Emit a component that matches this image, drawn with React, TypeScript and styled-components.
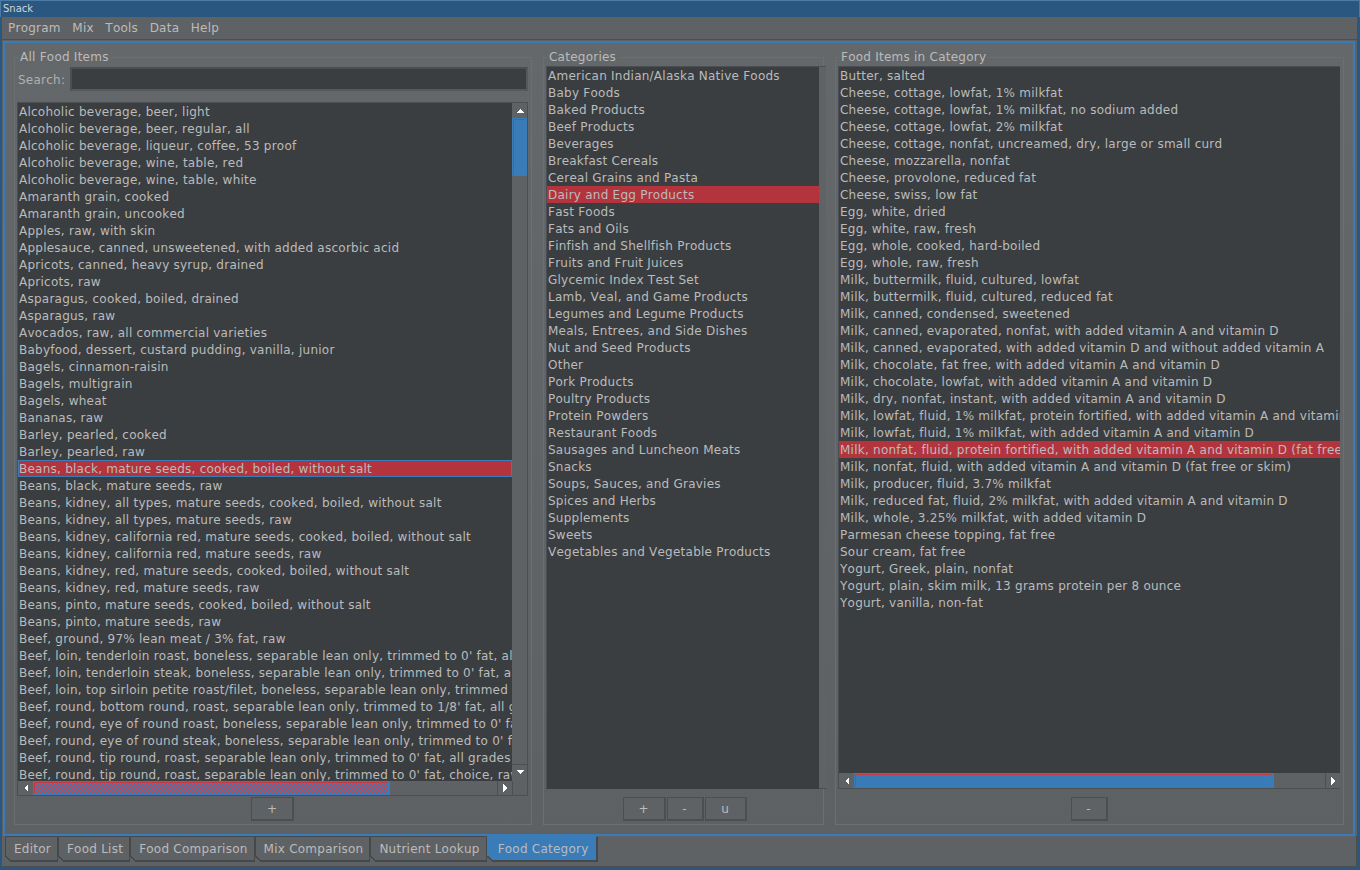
import React from 'react';
import styled, { createGlobalStyle } from 'styled-components';

const GlobalStyle = createGlobalStyle`
  html, body {
    margin: 0;
    padding: 0;
    height: 100%;
    background: #2a5780;
    overflow: hidden;
  }
  #root { height: 100%; }
`;

const Window = styled.div`
  width: 1360px;
  height: 870px;
  display: flex;
  flex-direction: column;
  box-sizing: border-box;
  background: #2a5780;
  font-family: "DejaVu Sans", sans-serif;
  font-size: 12px;
  font-kerning: none;
  letter-spacing: 0.24px;
  color: #bbbbbb;
`;

const TitleBar = styled.div`
  height: 17px;
  flex: none;
  box-sizing: border-box;
  padding-left: 2px;
  line-height: 15px;
  font-size: 10px;
  letter-spacing: 0;
  color: #d0d6da;
  background: #2a5780;
  border-top: 1px solid #4a7ba5;
  border-left: 1px solid #4a7ba5;
  border-right: 1px solid #4a7ba5;
`;

const Body = styled.div`
  flex: 1;
  margin: 0 3px 3px 2px;
  display: flex;
  flex-direction: column;
  background: #5f6265;
  min-height: 0;
`;

const MenuBar = styled.div`
  height: 23px;
  flex: none;
  box-sizing: border-box;
  display: flex;
  align-items: center;
  padding-left: 6px;
  gap: 11.5px;
  border-bottom: 1px solid #4c4f51;
  background: #5f6265;
`;

const MenuItem = styled.span`
  color: #bbbbbb;
  line-height: 20px;
`;

const TabFrame = styled.div`
  flex: 1;
  min-height: 0;
  margin: 1px 2px 0 1px;
  box-sizing: border-box;
  border: 2px solid #3a7cb8;
  padding: 7px 9px 9px 9px;
  display: grid;
  grid-template-columns: 518px 281px 509px;
  column-gap: 11px;
  align-content: start;
  background: linear-gradient(#65686a, #5e6164);
`;

const Panel = styled.fieldset<{ $flush?: boolean }>`
  margin: 0;
  padding: 0 ${(p) => (p.$flush ? '0' : '3px')} 3px 2px;
  min-width: 0;
  min-height: 0;
  height: 775px;
  box-sizing: border-box;
  border: 1px solid #6c6f72;
  display: flex;
  flex-direction: column;
`;

const PanelTitle = styled.legend`
  margin-left: 1px;
  padding: 0 2px;
  height: 14px;
  line-height: 14px;
  color: #bbbbbb;
`;

const SearchRow = styled.div`
  height: 24px;
  flex: none;
  display: flex;
  align-items: center;
  gap: 5px;
  margin: 3px 0 11px 0;
`;

const SearchLabel = styled.label`
  color: #aeb0b2;
  padding: 1px 0 0 1px;
`;

const SearchInput = styled.div`
  flex: 1;
  height: 24px;
  box-sizing: border-box;
  background: #3a3e41;
  border: 2px solid #4c4f51;
  border-right-color: #56595c;
  border-bottom-color: #56595c;
`;

const ListBox = styled.div<{ $top?: number; $overhang?: boolean }>`
  flex: 1;
  min-height: 0;
  margin-top: ${(p) => p.$top ?? 0}px;
  margin-right: ${(p) => (p.$overhang ? '-3px' : '0')};
  display: grid;
  grid-template-columns: minmax(0, 1fr) auto;
  grid-template-rows: minmax(0, 1fr) auto;
`;

const ListView = styled.div`
  grid-column: 1;
  grid-row: 1;
  overflow: hidden;
  background: #3a3e41;
  border-top: 1px solid #4c4f51;
  border-left: 1px solid #4c4f51;
`;

const Row = styled.div<{ $selected?: boolean; $focused?: boolean }>`
  height: 17px;
  box-sizing: border-box;
  line-height: 19px;
  padding-left: 1px;
  white-space: nowrap;
  overflow: hidden;
  color: #bbbbbb;
  background: ${(p) => (p.$selected ? '#b3343d' : 'transparent')};
  box-shadow: ${(p) => (p.$focused ? 'inset 0 0 0 1px #3a7cb8' : 'none')};
`;

const Gutter = styled.div`
  grid-column: 2;
  grid-row: 1;
  width: 7px;
  box-sizing: border-box;
  background: #606366;
  border-top: 1px solid #4c4f51;
  border-bottom: 1px solid #4c4f51;
`;

const VBar = styled.div`
  grid-column: 2;
  grid-row: 1;
  width: 16px;
  box-sizing: border-box;
  display: flex;
  flex-direction: column;
  background: #5f6265;
  border-top: 1px solid #4c4f51;
  border-right: 1px solid #4c4f51;
`;

const HBar = styled.div<{ $tall?: boolean }>`
  grid-column: 1;
  grid-row: 2;
  height: ${(p) => (p.$tall ? '16px' : '15px')};
  box-sizing: border-box;
  display: flex;
  background: #5f6265;
  border-bottom: 1px solid #4c4f51;
  border-left: 1px solid #4c4f51;
`;

const HArrowCell = styled.div<{ $end?: boolean }>`
  flex: none;
  width: 15px;
  box-sizing: border-box;
  display: flex;
  align-items: center;
  justify-content: center;
  border-left: ${(p) => (p.$end ? '1px solid #4c4f51' : '0')};
`;

const VArrowCell = styled.div<{ $end?: boolean }>`
  flex: none;
  height: ${(p) => (p.$end ? '17px' : '15px')};
  box-sizing: border-box;
  display: flex;
  align-items: center;
  justify-content: center;
  padding-bottom: ${(p) => (p.$end ? '2px' : '0')};
  border-top: ${(p) => (p.$end ? '1px solid #4c4f51' : '0')};
`;

const Corner = styled.div`
  grid-column: 2;
  grid-row: 2;
  width: 16px;
  height: 15px;
  box-sizing: border-box;
  border-left: 1px solid #4c4f51;
  border-right: 1px solid #4c4f51;
  border-bottom: 1px solid #4c4f51;
`;

// pressed scrollbar thumb: blue face, red edge, and a grid of 1px red dots.
// Dots are where vertical stripes (mask) cross horizontal stripes (background).
const Thumb = styled.div<{ $width?: number; $height?: number }>`
  flex: none;
  position: relative;
  box-sizing: border-box;
  ${(p) => (p.$width ? `width: ${p.$width}px;` : '')}
  ${(p) => (p.$height ? `height: ${p.$height}px;` : '')}
  background: #3a7cb8;
  overflow: hidden;

  &::before {
    content: '';
    position: absolute;
    inset: 1px 2px 1px 1px;
    border-top: 1px solid #c43a44;
    border-left: 1px solid #c43a44;
  }
`;

const ThumbDots = styled.div<{ $shift?: boolean; $bottom: number }>`
  position: absolute;
  top: ${(p) => (p.$shift ? '5px' : '3px')};
  left: ${(p) => (p.$shift ? '5px' : '3px')};
  right: 3px;
  bottom: ${(p) => p.$bottom}px;
  background: repeating-linear-gradient(to bottom, #c9404a 0 1px, transparent 1px 4px);
  mask-image: repeating-linear-gradient(to right, #000 0 1px, transparent 1px 4px);
  -webkit-mask-image: repeating-linear-gradient(to right, #000 0 1px, transparent 1px 4px);
`;

const Track = styled.div`
  flex: 1;
  min-width: 0;
  min-height: 0;
`;

const ButtonRow = styled.div<{ $top: number }>`
  height: 24px;
  flex: none;
  margin-top: ${(p) => p.$top}px;
  display: flex;
  justify-content: center;
  gap: 1px;
`;

const ActionButton = styled.button<{ $width: number }>`
  appearance: none;
  width: ${(p) => p.$width}px;
  height: 24px;
  padding: 0;
  font: inherit;
  color: #bbbbbb;
  background: #5f6265;
  border: 1px solid #4c4f51;
  border-right-width: 2px;
  border-bottom-width: 2px;
`;

const TabBar = styled.div`
  height: 31px;
  flex: none;
  display: flex;
  align-items: flex-start;
  padding-left: 3px;
  box-sizing: border-box;
  border-right: 1px solid #4c4f51;
  border-bottom: 1px solid #4c4f51;
  background: #5f6265;
`;

const Tab = styled.div<{ $active?: boolean }>`
  position: relative;
  height: 26px;
  padding: ${(p) => (p.$active ? '0 7px 0 10px' : '0 6px 0 8px')};
  line-height: 25px;
  box-sizing: border-box;
  color: #bbbbbb;
  margin-right: -1px;
  background: ${(p) => (p.$active ? '#3a7cb8' : '#5f6265')};
  border-right: 2px solid #46494b;
  border-bottom: 2px solid #46494b;
  border-left: 1px solid ${(p) => (p.$active ? '#3a7cb8' : '#46494b')};
  border-top: 1px solid ${(p) => (p.$active ? '#3a7cb8' : '#46494b')};

  &::before {
    content: '';
    position: absolute;
    left: -1px;
    bottom: -2px;
    width: 6px;
    height: 6px;
    background: linear-gradient(to top right, #5f6265 0 42%, #46494b 42% 62%, transparent 62%);
  }
`;

const FOODS = [
  'Alcoholic beverage, beer, light',
  'Alcoholic beverage, beer, regular, all',
  'Alcoholic beverage, liqueur, coffee, 53 proof',
  'Alcoholic beverage, wine, table, red',
  'Alcoholic beverage, wine, table, white',
  'Amaranth grain, cooked',
  'Amaranth grain, uncooked',
  'Apples, raw, with skin',
  'Applesauce, canned, unsweetened, with added ascorbic acid',
  'Apricots, canned, heavy syrup, drained',
  'Apricots, raw',
  'Asparagus, cooked, boiled, drained',
  'Asparagus, raw',
  'Avocados, raw, all commercial varieties',
  'Babyfood, dessert, custard pudding, vanilla, junior',
  'Bagels, cinnamon-raisin',
  'Bagels, multigrain',
  'Bagels, wheat',
  'Bananas, raw',
  'Barley, pearled, cooked',
  'Barley, pearled, raw',
  'Beans, black, mature seeds, cooked, boiled, without salt',
  'Beans, black, mature seeds, raw',
  'Beans, kidney, all types, mature seeds, cooked, boiled, without salt',
  'Beans, kidney, all types, mature seeds, raw',
  'Beans, kidney, california red, mature seeds, cooked, boiled, without salt',
  'Beans, kidney, california red, mature seeds, raw',
  'Beans, kidney, red, mature seeds, cooked, boiled, without salt',
  'Beans, kidney, red, mature seeds, raw',
  'Beans, pinto, mature seeds, cooked, boiled, without salt',
  'Beans, pinto, mature seeds, raw',
  'Beef, ground, 97% lean meat / 3% fat, raw',
  "Beef, loin, tenderloin roast, boneless, separable lean only, trimmed to 0' fat, all grades",
  "Beef, loin, tenderloin steak, boneless, separable lean only, trimmed to 0' fat, all grades",
  "Beef, loin, top sirloin petite roast/filet, boneless, separable lean only, trimmed to 1/8' fat",
  "Beef, round, bottom round, roast, separable lean only, trimmed to 1/8' fat, all grades",
  "Beef, round, eye of round roast, boneless, separable lean only, trimmed to 0' fat",
  "Beef, round, eye of round steak, boneless, separable lean only, trimmed to 0' fat",
  "Beef, round, tip round, roast, separable lean only, trimmed to 0' fat, all grades",
  "Beef, round, tip round, roast, separable lean only, trimmed to 0' fat, choice, raw",
];

const CATEGORIES = [
  'American Indian/Alaska Native Foods',
  'Baby Foods',
  'Baked Products',
  'Beef Products',
  'Beverages',
  'Breakfast Cereals',
  'Cereal Grains and Pasta',
  'Dairy and Egg Products',
  'Fast Foods',
  'Fats and Oils',
  'Finfish and Shellfish Products',
  'Fruits and Fruit Juices',
  'Glycemic Index Test Set',
  'Lamb, Veal, and Game Products',
  'Legumes and Legume Products',
  'Meals, Entrees, and Side Dishes',
  'Nut and Seed Products',
  'Other',
  'Pork Products',
  'Poultry Products',
  'Protein Powders',
  'Restaurant Foods',
  'Sausages and Luncheon Meats',
  'Snacks',
  'Soups, Sauces, and Gravies',
  'Spices and Herbs',
  'Supplements',
  'Sweets',
  'Vegetables and Vegetable Products',
];

const CATEGORY_FOODS = [
  'Butter, salted',
  'Cheese, cottage, lowfat, 1% milkfat',
  'Cheese, cottage, lowfat, 1% milkfat, no sodium added',
  'Cheese, cottage, lowfat, 2% milkfat',
  'Cheese, cottage, nonfat, uncreamed, dry, large or small curd',
  'Cheese, mozzarella, nonfat',
  'Cheese, provolone, reduced fat',
  'Cheese, swiss, low fat',
  'Egg, white, dried',
  'Egg, white, raw, fresh',
  'Egg, whole, cooked, hard-boiled',
  'Egg, whole, raw, fresh',
  'Milk, buttermilk, fluid, cultured, lowfat',
  'Milk, buttermilk, fluid, cultured, reduced fat',
  'Milk, canned, condensed, sweetened',
  'Milk, canned, evaporated, nonfat, with added vitamin A and vitamin D',
  'Milk, canned, evaporated, with added vitamin D and without added vitamin A',
  'Milk, chocolate, fat free, with added vitamin A and vitamin D',
  'Milk, chocolate, lowfat, with added vitamin A and vitamin D',
  'Milk, dry, nonfat, instant, with added vitamin A and vitamin D',
  'Milk, lowfat, fluid, 1% milkfat, protein fortified, with added vitamin A and vitamin D',
  'Milk, lowfat, fluid, 1% milkfat, with added vitamin A and vitamin D',
  'Milk, nonfat, fluid, protein fortified, with added vitamin A and vitamin D (fat free and skim)',
  'Milk, nonfat, fluid, with added vitamin A and vitamin D (fat free or skim)',
  'Milk, producer, fluid, 3.7% milkfat',
  'Milk, reduced fat, fluid, 2% milkfat, with added vitamin A and vitamin D',
  'Milk, whole, 3.25% milkfat, with added vitamin D',
  'Parmesan cheese topping, fat free',
  'Sour cream, fat free',
  'Yogurt, Greek, plain, nonfat',
  'Yogurt, plain, skim milk, 13 grams protein per 8 ounce',
  'Yogurt, vanilla, non-fat',
];

const TABS = ['Editor', 'Food List', 'Food Comparison', 'Mix Comparison', 'Nutrient Lookup', 'Food Category'];

const Arrow = ({ dir }: { dir: 'up' | 'down' | 'left' | 'right' }) => {
  const points = {
    up: '0,4 4,0 8,4',
    down: '0,0 8,0 4,4',
    left: '4,0 4,8 0,4',
    right: '0,0 4,4 0,8',
  }[dir];
  const vertical = dir === 'up' || dir === 'down';
  return (
    <svg width={vertical ? 8 : 4} height={vertical ? 4 : 8} shapeRendering="crispEdges">
      <polygon points={points} fill="#ffffff" />
    </svg>
  );
};

function App() {
  return (
    <Window>
      <GlobalStyle />
      <TitleBar>Snack</TitleBar>
      <Body>
        <MenuBar>
          {['Program', 'Mix', 'Tools', 'Data', 'Help'].map((m) => (
            <MenuItem key={m}>{m}</MenuItem>
          ))}
        </MenuBar>
        <TabFrame>
          <Panel>
            <PanelTitle>All Food Items</PanelTitle>
            <SearchRow>
              <SearchLabel>Search:</SearchLabel>
              <SearchInput />
            </SearchRow>
            <ListBox>
              <ListView>
                {FOODS.map((f, i) => (
                  <Row key={f} $selected={i === 21} $focused={i === 21}>
                    {f}
                  </Row>
                ))}
              </ListView>
              <VBar>
                <VArrowCell>
                  <Arrow dir="up" />
                </VArrowCell>
                <Thumb $height={58}>
                  <ThumbDots $bottom={7} />
                  <ThumbDots $bottom={7} $shift />
                </Thumb>
                <Track />
                <VArrowCell $end>
                  <Arrow dir="down" />
                </VArrowCell>
              </VBar>
              <HBar>
                <HArrowCell>
                  <Arrow dir="left" />
                </HArrowCell>
                <Thumb $width={357}>
                  <ThumbDots $bottom={2} />
                  <ThumbDots $bottom={2} $shift />
                </Thumb>
                <Track />
                <HArrowCell $end>
                  <Arrow dir="right" />
                </HArrowCell>
              </HBar>
              <Corner />
            </ListBox>
            <ButtonRow $top={1}>
              <ActionButton $width={43}>+</ActionButton>
            </ButtonRow>
          </Panel>
          <Panel $flush>
            <PanelTitle>Categories</PanelTitle>
            <ListBox $top={2} $overhang>
              <ListView>
                {CATEGORIES.map((c, i) => (
                  <Row key={c} $selected={i === 7}>
                    {c}
                  </Row>
                ))}
              </ListView>
              <Gutter />
            </ListBox>
            <ButtonRow $top={8}>
              <ActionButton $width={43}>+</ActionButton>
              <ActionButton $width={37}>-</ActionButton>
              <ActionButton $width={42}>u</ActionButton>
            </ButtonRow>
          </Panel>
          <Panel>
            <PanelTitle>Food Items in Category</PanelTitle>
            <ListBox $top={2}>
              <ListView>
                {CATEGORY_FOODS.map((f, i) => (
                  <Row key={f} $selected={i === 22}>
                    {f}
                  </Row>
                ))}
              </ListView>
              <HBar $tall>
                <HArrowCell>
                  <Arrow dir="left" />
                </HArrowCell>
                <Thumb $width={420}>
                  <ThumbDots $bottom={3} />
                  <ThumbDots $bottom={3} $shift />
                </Thumb>
                <Track />
                <HArrowCell $end>
                  <Arrow dir="right" />
                </HArrowCell>
              </HBar>
            </ListBox>
            <ButtonRow $top={8}>
              <ActionButton $width={37}>-</ActionButton>
            </ButtonRow>
          </Panel>
        </TabFrame>
        <TabBar>
          {TABS.map((t, i) => (
            <Tab key={t} $active={i === TABS.length - 1}>
              {t}
            </Tab>
          ))}
        </TabBar>
      </Body>
    </Window>
  );
}

export default App;
